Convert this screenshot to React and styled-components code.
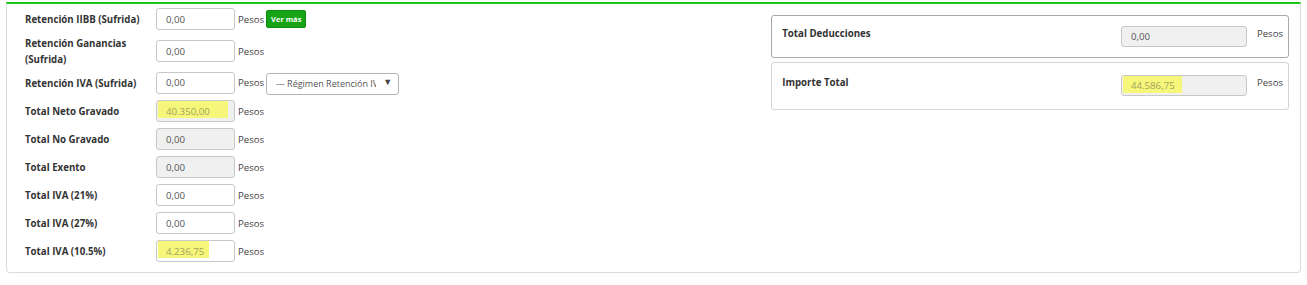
import React from "react";
import styled, { createGlobalStyle } from "styled-components";

const GlobalStyle = createGlobalStyle`
  body {
    margin: 0;
    background: #fff;
    font-family: "Open Sans", "Noto Sans", sans-serif;
    color: #333;
  }
`;

const Page = styled.div`
  padding: 2px 6px 0 6px;
`;

const Panel = styled.div`
  display: grid;
  grid-template-columns: 7fr 5fr;
  border: 1px solid #dcdcdc;
  border-top: 2px solid #16c916;
  border-radius: 0 0 4px 4px;
  padding-bottom: 7px;
`;

const LeftCol = styled.div`
  padding-left: 18px;
`;

const Row = styled.div`
  display: flex;
  align-items: center;
  height: ${(p) => p.$h}px;
`;

const Label = styled.div`
  width: 131px;
  flex-shrink: 0;
  margin-top: 2px;
  font-size: 9.7px;
  font-weight: 700;
  line-height: 16px;
  color: #333;
`;

const Input = styled.input`
  box-sizing: border-box;
  width: ${(p) => p.$w || 79}px;
  height: ${(p) => p.$hh || 22}px;
  border: 1px solid #c8c8c8;
  border-radius: 3px;
  padding: 0 0 0 9px;
  font-family: inherit;
  font-size: 9.7px;
  color: ${(p) => (p.$mark ? "#a3a35e" : "#555")};
  background-color: ${(p) => (p.disabled ? "#f0f0f0" : "#fff")};
  background-image: ${(p) =>
    p.$mark ? "linear-gradient(#f6f67a, #f6f67a)" : "none"};
  background-repeat: no-repeat;
  background-position: 1px 0;
  background-size: ${(p) => p.$mark || 0}px 17px;
  outline: none;
  &:disabled {
    opacity: 1;
  }
`;

const Unit = styled.span`
  font-size: 9.6px;
  color: #444;
  margin: 0 0 0 3px;
`;

const GreenButton = styled.button`
  margin-left: 2px;
  height: 18px;
  padding: 0 4px;
  border: 1px solid #0f8e0f;
  border-radius: 2px;
  background: #16a316;
  color: #fff;
  font-family: inherit;
  font-size: 7.5px;
  font-weight: 700;
  cursor: pointer;
`;

const SelectWrap = styled.div`
  position: relative;
  margin-left: 2px;
`;

const Select = styled.select`
  appearance: none;
  box-sizing: border-box;
  width: 133px;
  height: 22px;
  border: 1px solid #b4b4b4;
  border-radius: 3px;
  padding: 0 22px 0 9px;
  font-family: inherit;
  font-size: 9px;
  color: #555;
  background: #fff;
  outline: none;
`;

const Arrow = styled.span`
  position: absolute;
  right: 7px;
  top: 5px;
  font-size: 9px;
  color: #444;
  pointer-events: none;
`;

const RightCol = styled.div`
  padding: 11px 11px 0 10px;
  display: flex;
  flex-direction: column;
  gap: 4px;
`;

const TotalBox = styled.div`
  display: flex;
  align-items: flex-start;
  border: 1px solid ${(p) => p.$border};
  border-radius: 3px;
  padding: ${(p) => p.$pt}px 5px ${(p) => p.$pb}px 10px;
`;

const BoxLabel = styled(Label)`
  width: auto;
  flex: 1;
  margin-top: 0;
`;

const BoxUnit = styled(Unit)`
  margin: 0 0 0 10px;
  line-height: 16px;
`;

const rows = [
  { label: "Retención IIBB (Sufrida)", h: 30, extra: "button" },
  { label: ["Retención Ganancias", "(Sufrida)"], h: 34 },
  { label: "Retención IVA (Sufrida)", h: 29, extra: "select" },
  { label: "Total Neto Gravado", value: "40.350,00", disabled: true, mark: 70 },
  { label: "Total No Gravado", value: "0,00", disabled: true },
  { label: "Total Exento", value: "0,00", disabled: true },
  { label: "Total IVA (21%)" },
  { label: "Total IVA (27%)" },
  { label: "Total IVA (10.5%)", value: "4.236,75", mark: 51 },
];

export default function App() {
  return (
    <>
      <GlobalStyle />
      <Page>
        <Panel>
          <LeftCol>
            {rows.map((r, i) => (
              <Row key={i} $h={r.h || 28}>
                <Label>
                  {Array.isArray(r.label) ? (
                    <>
                      {r.label[0]}
                      <br />
                      {r.label[1]}
                    </>
                  ) : (
                    r.label
                  )}
                </Label>
                <Input
                  readOnly
                  value={r.value || "0,00"}
                  disabled={r.disabled}
                  $mark={r.mark}
                />
                <Unit>Pesos</Unit>
                {r.extra === "button" && <GreenButton>Ver más</GreenButton>}
                {r.extra === "select" && (
                  <SelectWrap>
                    <Select defaultValue="">
                      <option value="">--- Régimen Retención IVA ---</option>
                    </Select>
                    <Arrow>▼</Arrow>
                  </SelectWrap>
                )}
              </Row>
            ))}
          </LeftCol>
          <RightCol>
            <TotalBox $border="#a8a8a8" $pt={10} $pb={10}>
              <BoxLabel>Total Deducciones</BoxLabel>
              <Input readOnly disabled value="0,00" $w={126} $hh={21} />
              <BoxUnit>Pesos</BoxUnit>
            </TotalBox>
            <TotalBox $border="#d4d4d4" $pt={12} $pb={13}>
              <BoxLabel>Importe Total</BoxLabel>
              <Input
                readOnly
                disabled
                value="44.586,75"
                $w={126}
                $hh={21}
                $mark={59}
              />
              <BoxUnit>Pesos</BoxUnit>
            </TotalBox>
          </RightCol>
        </Panel>
      </Page>
    </>
  );
}
